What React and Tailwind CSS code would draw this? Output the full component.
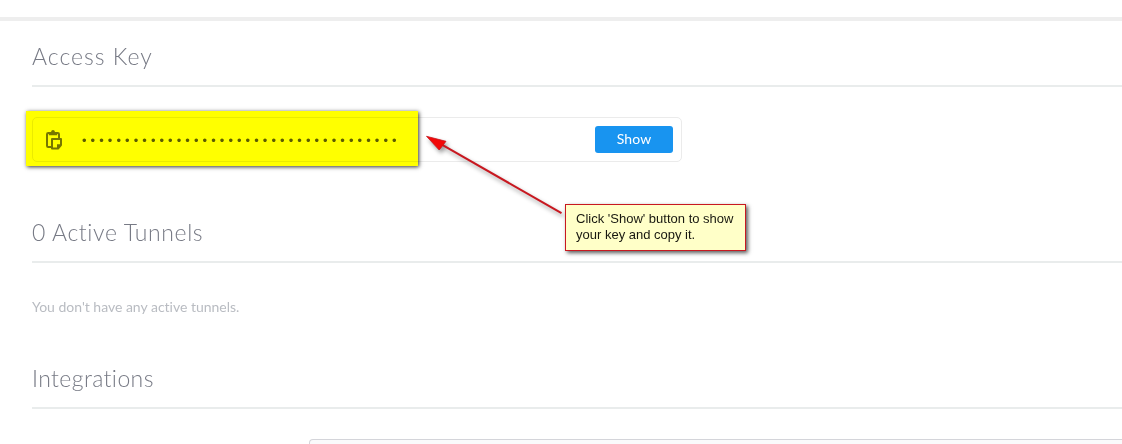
const MASKED_KEY = "•".repeat(37);

function PasteIcon() {
  return (
    <svg className="h-5 w-4 shrink-0" viewBox="0 0 16 20" fill="none">
      <path d="M4.5 3H2.2Q1 3 1 4.2V15.8Q1 17 2.2 17H5" stroke="#77777b" strokeWidth="2" />
      <path d="M9.5 3h2.3Q13 3 13 4.2V8" stroke="#77777b" strokeWidth="2" />
      <path d="M2.8 5.2V2H5Q5.3 0 7 0T9 2h2.2v3.2z" fill="#77777b" />
      <path d="M6 9h9v6L12 18.6H6z" stroke="#77777b" strokeWidth="2" strokeLinejoin="round" />
      <path d="M11 14.2H15.5L11 19z" fill="#77777b" />
    </svg>
  );
}

function Heading({ children, className }) {
  return (
    <h2
      className={`flex h-[58px] items-center border-b-2 border-[#e9ecec] pb-px font-['Lato','Open_Sans',sans-serif] text-[23px] font-light text-[#777a85] ${className}`}
    >
      {children}
    </h2>
  );
}

function Arrow() {
  return (
    <svg
      className="absolute left-[420px] top-[128px] h-[96px] w-[150px] drop-shadow-[2px_3px_2px_rgba(0,0,0,0.4)]"
      viewBox="420 128 150 96"
    >
      <path d="M441 144.2L561.5 213.2" stroke="#c81820" strokeWidth="2.1" />
      <path d="M426.5 136.3L446 141.3L442.8 145.4L439.2 150Z" fill="#f20808" stroke="#c81820" strokeWidth="0.8" />
    </svg>
  );
}

export default function App() {
  return (
    <main className="relative h-[444px] w-full overflow-hidden bg-white font-['Lato','Open_Sans',sans-serif]">
      <div className="mt-[17px] h-1 bg-[#eeeeee]" />
      <div className="pl-8">
        <section className="pt-2">
          <Heading className="tracking-[1px]">Access Key</Heading>
          <div className="mt-[30px] flex h-[45px] w-[650px] items-center rounded-[5px] border border-[#ebebeb] pl-[13px] pr-2">
            <PasteIcon />
            <span className="ml-5 whitespace-nowrap pt-px font-['Liberation_Sans',sans-serif] text-[13px] leading-none tracking-[4.06px] text-[#5c5c60]">
              {MASKED_KEY}
            </span>
            <button className="ml-auto h-[27px] w-[78px] shrink-0 rounded-[3px] bg-[#1894f0] pb-px text-[14px] leading-[26px] tracking-[0.1px] text-white">
              Show
            </button>
          </div>
        </section>
        <section className="pt-[43px]">
          <Heading className="tracking-[0.6px]">0 Active Tunnels</Heading>
          <p className="mt-[34px] h-5 text-[14px] leading-5 tracking-[-0.01px] text-[#b9bcc2] [font-variant-ligatures:none]">
            You don't have any active tunnels.
          </p>
        </section>
        <section className="pt-[34px]">
          <Heading className="tracking-[0.4px]">Integrations</Heading>
          <div className="ml-[277px] mt-[30px] h-10 rounded-tl-[4px] border-l border-t border-[#d4d5da] bg-[#fafafb]" />
        </section>
      </div>
      <div className="absolute left-[26px] top-[111px] h-[55px] w-[392px] bg-[#ffff00] mix-blend-multiply shadow-[1px_1px_4px_rgba(0,0,0,0.8)]" />
      <Arrow />
      <div className="absolute left-[565px] top-[204px] h-[47px] w-[181px] whitespace-nowrap border border-[#c81820] bg-[#ffffc8] pl-[10px] pt-[6px] font-['Liberation_Sans',sans-serif] text-[13px] leading-4 text-[#181810] shadow-[2px_2px_4px_rgba(0,0,0,0.65)]">
        Click 'Show' button to show
        <br />
        your key and copy it.
      </div>
    </main>
  );
}
